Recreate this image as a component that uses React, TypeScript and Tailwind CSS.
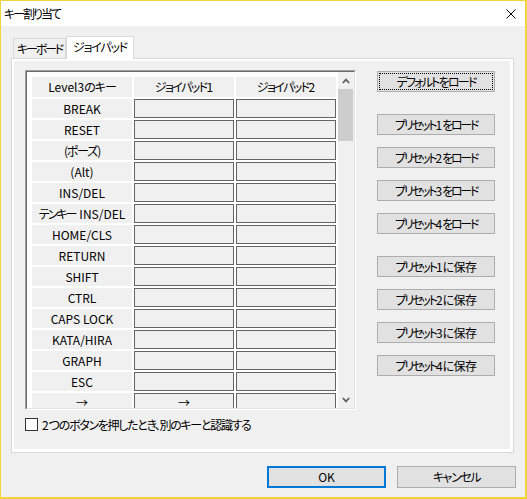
import React from "react";

function K({ children, t }: { children: React.ReactNode; t: string }) {
  return <span className={t}>{children}</span>;
}

const rows: [React.ReactNode, string, string][] = [
  ["BREAK", "", ""],
  ["RESET", "", ""],
  [<K t="tracking-[-1.2px]">(ポーズ)</K>, "", ""],
  ["(Alt)", "", ""],
  ["INS/DEL", "", ""],
  [
    <span>
      <K t="tracking-[-2px]">テンキー</K>
      <span className="ml-[4px]">INS/DEL</span>
    </span>,
    "",
    "",
  ],
  ["HOME/CLS", "", ""],
  ["RETURN", "", ""],
  ["SHIFT", "", ""],
  ["CTRL", "", ""],
  ["CAPS LOCK", "", ""],
  ["KATA/HIRA", "", ""],
  ["GRAPH", "", ""],
  ["ESC", "", ""],
  ["→", "→", ""],
];

function WinButton({ children, focused }: { children: React.ReactNode; focused?: boolean }) {
  if (focused) {
    return (
      <div className="flex h-[21px] w-[118px] border border-[#adadad] bg-[#e1e1e1] p-[1px]">
        <div className="flex flex-1 items-center justify-center border border-dotted border-black text-[12px] leading-none whitespace-nowrap">
          <span>{children}</span>
        </div>
      </div>
    );
  }
  return (
    <div className="flex h-[21px] w-[118px] items-center justify-center border border-[#adadad] bg-[#e1e1e1] text-[12px] leading-none whitespace-nowrap">
      <span>{children}</span>
    </div>
  );
}

function LoadLabel({ n }: { n: string }) {
  return (
    <>
      <K t="tracking-[-2.1px]">プリセット</K>
      <span>{n}</span>
      <K t="tracking-[-2.3px]">をロード</K>
    </>
  );
}

function SaveLabel({ n }: { n: string }) {
  return (
    <>
      <K t="tracking-[-2.1px]">プリセット</K>
      <span>{n}</span>
      <K t="tracking-[-0.5px]">に保存</K>
    </>
  );
}

export default function App() {
  return (
    <div className="flex h-[499px] w-[527px] flex-col border-t border-l border-r-2 border-b-2 border-[#f0d43a] font-['Noto_Sans_CJK_JP','Noto_Sans',sans-serif] text-black [font-feature-settings:'palt']">
      {/* Title bar */}
      <div className="flex h-[25px] items-center justify-between bg-white pl-[3px] pr-[9px]">
        <span className="text-[12px] leading-none tracking-[-2px]">キー割り当て</span>
        <svg width="10" height="10" viewBox="0 0 10 10" className="block">
          <path d="M0.5 0.5 L9.5 9.5 M9.5 0.5 L0.5 9.5" stroke="#000" strokeWidth="1" />
        </svg>
      </div>

      {/* Body */}
      <div className="flex flex-1 flex-col bg-[#f0f0f0] pl-[10px] pr-[11px] pt-[10px]">
        {/* Tabs */}
        <div className="relative z-10 flex h-[22px] items-end pl-[2px]">
          <div className="flex h-[20px] w-[53px] items-center justify-center whitespace-nowrap border border-b-0 border-[#d9d9d9] bg-[#f0f0f0] pt-[1px] text-[12px] leading-none tracking-[-2.2px]">
            キーボード
          </div>
          <div className="-mb-[1px] flex h-[23px] w-[68px] items-start justify-center whitespace-nowrap border border-b-0 border-[#d9d9d9] bg-white pt-[4px] text-[12px] leading-none tracking-[-1.2px]">
            ジョイパッド
          </div>
        </div>

        {/* Panel */}
        <div className="flex h-[395px] flex-col border border-[#d9d9d9] bg-white pl-[2px] pr-[3px] pt-[2px] pb-[3px]">
          <div className="flex flex-1 flex-col bg-[#f0f0f0] pl-[11px] pt-[9px]">
            <div className="flex">
              {/* Table */}
              <div className="h-[340px] w-[331px] border border-t-[#a0a0a0] border-l-[#a0a0a0] border-r-white border-b-white">
                <div className="flex h-full w-full overflow-hidden border border-t-[#696969] border-l-[#696969] border-r-[#e3e3e3] border-b-[#e3e3e3] bg-white">
                  <div className="flex w-[311px] flex-col gap-[2px] pl-[5px] pt-[5px]">
                    <div className="flex h-[20px] shrink-0 gap-[2px]">
                      <div className="flex w-[100px] items-center justify-center bg-[#f0f0f0] text-[12px] leading-none">
                        <span>
                          Level3<K t="tracking-[-1px]">のキー</K>
                        </span>
                      </div>
                      <div className="flex w-[100px] items-center justify-center bg-[#f0f0f0] text-[12px] leading-none">
                        <span>
                          <K t="tracking-[-1.6px]">ジョイパッド</K>1
                        </span>
                      </div>
                      <div className="flex w-[100px] items-center justify-center bg-[#f0f0f0] text-[12px] leading-none">
                        <span>
                          <K t="tracking-[-1.6px]">ジョイパッド</K>2
                        </span>
                      </div>
                    </div>
                    {rows.map((r, i) => (
                      <div key={i} className="flex h-[19px] shrink-0 gap-[2px]">
                        <div className="flex w-[100px] items-center justify-center whitespace-nowrap bg-[#f0f0f0] text-[12px] leading-none">
                          {r[0]}
                        </div>
                        <div className="flex w-[100px] items-center justify-center border border-[#646464] bg-[#f0f0f0] text-[12px] leading-none">
                          {r[1]}
                        </div>
                        <div className="flex w-[100px] items-center justify-center border border-[#646464] bg-[#f0f0f0] text-[12px] leading-none">
                          {r[2]}
                        </div>
                      </div>
                    ))}
                  </div>
                  {/* Scrollbar */}
                  <div className="flex w-[16px] flex-col bg-[#f0f0f0]">
                    <div className="flex h-[17px] items-center justify-center">
                      <svg width="8" height="6" viewBox="0 0 8 6">
                        <path d="M0.8 5 L4 1.6 L7.2 5" fill="none" stroke="#606060" strokeWidth="1.8" />
                      </svg>
                    </div>
                    <div className="h-[52px] w-[15px] bg-[#cdcdcd]" />
                    <div className="flex-1" />
                    <div className="flex h-[17px] items-center justify-center">
                      <svg width="8" height="6" viewBox="0 0 8 6">
                        <path d="M0.8 1 L4 4.4 L7.2 1" fill="none" stroke="#606060" strokeWidth="1.8" />
                      </svg>
                    </div>
                  </div>
                </div>
              </div>

              {/* Buttons column */}
              <div className="ml-[21px] flex flex-col pt-[1px]">
                <WinButton focused>
                  <K t="tracking-[-1.8px]">デフォルトをロード</K>
                </WinButton>
                <div className="mt-[22px] flex flex-col gap-[12px]">
                  <WinButton><LoadLabel n="1" /></WinButton>
                  <WinButton><LoadLabel n="2" /></WinButton>
                  <WinButton><LoadLabel n="3" /></WinButton>
                  <WinButton><LoadLabel n="4" /></WinButton>
                </div>
                <div className="mt-[22px] flex flex-col gap-[12px]">
                  <WinButton><SaveLabel n="1" /></WinButton>
                  <WinButton><SaveLabel n="2" /></WinButton>
                  <WinButton><SaveLabel n="3" /></WinButton>
                  <WinButton><SaveLabel n="4" /></WinButton>
                </div>
              </div>
            </div>

            {/* Checkbox */}
            <div className="mt-[8px] flex items-center">
              <div className="h-[13px] w-[13px] border border-[#333333] bg-white" />
              <span className="ml-[4px] whitespace-nowrap text-[12px] leading-none">
                2<K t="tracking-[-1.3px]">つのボタンを押したとき、別のキーと認識する</K>
              </span>
            </div>
          </div>
        </div>

        {/* Bottom buttons */}
        <div className="-mr-[2px] mt-[13px] flex justify-end gap-[11px]">
          <div className="flex h-[22px] w-[119px] items-center justify-center border-2 border-[#0078d7] bg-[#e1e1e1] text-[12px] leading-none">
            OK
          </div>
          <div className="flex h-[22px] w-[119px] items-center justify-center border border-[#adadad] bg-[#e1e1e1] text-[12px] leading-none tracking-[-1.4px]">
            キャンセル
          </div>
        </div>
      </div>
    </div>
  );
}
